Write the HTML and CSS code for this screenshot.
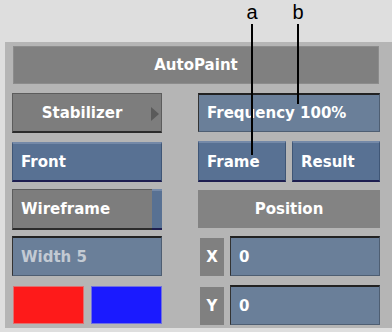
FILE: index.html
```html
<!DOCTYPE html>
<html lang="en">
<head>
    <meta charset="UTF-8">
    <meta name="viewport" content="width=device-width, initial-scale=1.0">
    <title>AutoPaint</title>
    <link rel="stylesheet" href="styles.css">
</head>
<body>
    <!-- Callouts -->
    <div class="callout callout-a">
        <span>a</span>
        <div class="line"></div>
    </div>
    <div class="callout callout-b">
        <span>b</span>
        <div class="line"></div>
    </div>

    <!-- Panel -->
    <div class="panel">
        <div class="title">AutoPaint</div>
        <div class="cols">
            <div class="col col-left">
                <div class="btn grey stabilizer">Stabilizer<span class="arrow"></span></div>
                <div class="btn blue front">Front</div>
                <div class="btn grey wireframe">Wireframe<span class="toggle"></span></div>
                <div class="field disabled width">Width 5</div>
                <div class="swatches">
                    <div class="swatch red"></div>
                    <div class="swatch blue-swatch"></div>
                </div>
            </div>
            <div class="col col-right">
                <div class="field frequency">Frequency 100%</div>
                <div class="pair">
                    <div class="btn blue">Frame</div>
                    <div class="btn blue">Result</div>
                </div>
                <div class="label position">Position</div>
                <div class="coord coord-x">
                    <div class="axis">X</div>
                    <div class="field">0</div>
                </div>
                <div class="coord coord-y">
                    <div class="axis">Y</div>
                    <div class="field">0</div>
                </div>
            </div>
        </div>
    </div>
</body>
</html>
```

FILE: styles.css
```css
body {
    margin: 0;
    padding: 0;
    background-color: #dedede;
    font-family: "DejaVu Sans", sans-serif;
    font-weight: bold;
    font-size: 15px;
    color: white;
}

/* Callouts */
.callout {
    position: absolute;
    top: 0;
    display: flex;
    flex-direction: column;
    align-items: center;
    width: 20px;
    z-index: 2;
}

.callout span {
    font-family: "Liberation Sans", Arial, sans-serif;
    font-weight: normal;
    font-size: 20px;
    line-height: 24px;
    color: black;
}

.callout .line {
    width: 2px;
    background-color: black;
}

.callout-a {
    left: 242px;
}

.callout-a .line {
    height: 131px;
}

.callout-b {
    left: 288px;
}

.callout-b .line {
    height: 80px;
}

/* Panel */
.panel {
    margin: 42px 0 0 5px;
    height: 286px;
    box-sizing: border-box;
    padding: 4px 12px 0 7px;
    background-color: #b5b5b5;
}

.title {
    height: 38px;
    margin: 0 1px;
    background-color: #808080;
    border: 1px solid #8c8c8c;
    box-sizing: border-box;
    display: flex;
    align-items: center;
    justify-content: center;
}

.cols {
    display: flex;
    justify-content: space-between;
    margin-top: 9px;
}

.col {
    display: flex;
    flex-direction: column;
}

.col-left {
    width: 150px;
}

.col-right {
    width: 182px;
}

/* Buttons */
.btn {
    height: 40px;
    box-sizing: border-box;
    display: flex;
    align-items: center;
    padding-left: 8px;
    position: relative;
}

.btn.grey {
    background-color: #7d7d7d;
    border: 1px solid #5c5c5c;
    border-bottom: 2px solid #2c2c2c;
}

.btn.blue {
    background-color: #587193;
    border: 1px solid #3f5676;
    border-top: 2px solid #7489a8;
    border-bottom: 2px solid #1e1e50;
}

.stabilizer {
    justify-content: center;
    padding: 0 10px 0 0;
}

.arrow {
    position: absolute;
    right: 2px;
    top: 13px;
    border-top: 7px solid transparent;
    border-bottom: 7px solid transparent;
    border-left: 8px solid #5a5a5a;
}

.front {
    margin-top: 9px;
}

.wireframe {
    margin-top: 7px;
    height: 41px;
}

.toggle {
    position: absolute;
    right: -1px;
    top: -1px;
    bottom: -2px;
    width: 10px;
    background-color: #587193;
    border-top: 2px solid #7489a8;
    border-bottom: 2px solid #1e1e50;
    box-sizing: border-box;
}

/* Fields */
.field {
    height: 40px;
    box-sizing: border-box;
    background-color: #6a7f99;
    border: 1px solid #4e5e72;
    border-top: 2px solid #222;
    border-left: 1px solid #333;
    display: flex;
    align-items: center;
    padding-left: 8px;
}

.field.disabled {
    color: #c3cad3;
}

.width {
    margin-top: 6px;
}

.frequency {
    height: 39px;
}

/* Swatches */
.swatches {
    display: flex;
    justify-content: space-between;
    margin: 10px 0 0 1px;
}

.swatch {
    width: 71px;
    height: 38px;
    box-sizing: border-box;
}

.swatch.red {
    background-color: #fe1a1a;
    border: 1px solid #e07070;
}

.swatch.blue-swatch {
    background-color: #1a1aff;
    border: 1px solid #7070e0;
}

/* Right column */
.pair {
    display: flex;
    gap: 6px;
    margin-top: 9px;
}

.pair .btn {
    flex: 1;
    height: 41px;
}

.label {
    height: 38px;
    margin-top: 8px;
    background-color: #838383;
    display: flex;
    align-items: center;
    justify-content: center;
}

.coord {
    display: flex;
    gap: 6px;
    height: 40px;
}

.coord-x {
    margin-top: 8px;
}

.coord-y {
    margin-top: 9px;
}

.axis {
    width: 24px;
    margin: 2px 0 0 2px;
    background-color: #808080;
    display: flex;
    align-items: center;
    justify-content: center;
}

.coord .field {
    flex: 1;
}
```
